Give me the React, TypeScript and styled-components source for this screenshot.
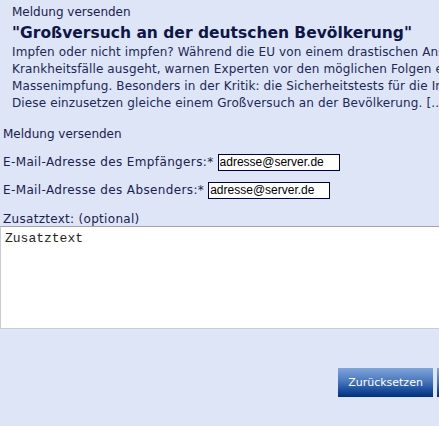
import React from "react";
import styled, { createGlobalStyle } from "styled-components";

const GlobalStyle = createGlobalStyle`
  html, body {
    margin: 0;
    padding: 0;
    background: #dde5f6;
    overflow: hidden;
  }
  body {
    font-family: "DejaVu Sans", Verdana, sans-serif;
    font-size: 12px;
    color: #1c2857;
  }
`;

const leadLines = [
  "Impfen oder nicht impfen? Während die EU von einem drastischen Anstieg der",
  "Krankheitsfälle ausgeht, warnen Experten vor den möglichen Folgen einer",
  "Massenimpfung. Besonders in der Kritik: die Sicherheitstests für die Impfstoffe.",
  "Diese einzusetzen gleiche einem Großversuch an der Bevölkerung. [...]",
];

export default function App() {
  return (
    <>
      <GlobalStyle />
      <Page>
        <Teaser>
          <Kicker>Meldung versenden</Kicker>
          <Headline>"Großversuch an der deutschen Bevölkerung"</Headline>
          <Lead>
            {leadLines.map((line) => (
              <span key={line}>{line}</span>
            ))}
          </Lead>
        </Teaser>

        <Form onSubmit={(e) => e.preventDefault()}>
          <FormTitle>Meldung versenden</FormTitle>
          <Fields>
            <FieldRow>
              <label htmlFor="to">E-Mail-Adresse des Empfängers:*</label>
              <MailInput id="to" defaultValue="adresse@server.de" />
            </FieldRow>
            <FieldRow>
              <label htmlFor="from">E-Mail-Adresse des Absenders:*</label>
              <MailInput id="from" defaultValue="adresse@server.de" />
            </FieldRow>
          </Fields>
          <NoteLabel htmlFor="note">Zusatztext: (optional)</NoteLabel>
          <NoteArea id="note" defaultValue="Zusatztext" />
          <Actions>
            <ActionButton type="reset">Zurücksetzen</ActionButton>
            <ActionButton type="submit">Absenden</ActionButton>
          </Actions>
        </Form>
      </Page>
    </>
  );
}

const Page = styled.div`
  width: 560px;
  min-height: 426px;
`;

const Teaser = styled.section`
  padding: 4px 0 0 12px;
`;

const Kicker = styled.div`
  line-height: 17px;
  color: #1a2150;
`;

const Headline = styled.h1`
  margin: 0;
  font-size: 15.5px;
  font-weight: bold;
  line-height: 24px;
  color: #0e1648;
  white-space: nowrap;
`;

const Lead = styled.p`
  margin: -1px 0 0;
  line-height: 17px;
  letter-spacing: 0.12px;
  white-space: nowrap;

  span {
    display: block;
  }
`;

const Form = styled.form`
  margin-top: 14px;
`;

const FormTitle = styled.div`
  padding-left: 3px;
  line-height: 17px;
  color: #1a2150;
`;

const Fields = styled.div`
  display: flex;
  flex-direction: column;
  margin-top: 5px;
`;

const FieldRow = styled.div`
  display: flex;
  align-items: center;
  gap: 4px;
  height: 28px;
  padding-left: 3px;

  label {
    color: #1a2150;
    letter-spacing: 0.37px;
  }
`;

const MailInput = styled.input`
  box-sizing: border-box;
  width: 122px;
  height: 17px;
  padding: 0 1px;
  border: 1px solid #00004a;
  background: #fff;
  font-family: "Liberation Sans", Arial, sans-serif;
  font-size: 12px;
  color: #000;
  outline: none;
`;

const NoteLabel = styled.label`
  display: block;
  margin-top: 8px;
  padding-left: 3px;
  line-height: 14px;
  letter-spacing: 0.3px;
  color: #1a2150;
`;

const NoteArea = styled.textarea`
  display: block;
  box-sizing: border-box;
  width: 100%;
  height: 103px;
  margin: 0;
  padding: 4px 4px;
  border: 1px solid #c6ccd8;
  border-top-color: #a3a3a3;
  background: #fff;
  font-family: "Liberation Mono", "Courier New", monospace;
  font-size: 13px;
  color: #2a2418;
  resize: none;
  outline: none;
`;

const Actions = styled.div`
  display: flex;
  gap: 4px;
  margin-top: 39px;
  padding-left: 338px;
`;

const ActionButton = styled.button`
  width: 95px;
  height: 29px;
  border: none;
  padding: 0;
  background: linear-gradient(to bottom, #7ea6da 0%, #4a78be 45%, #1d4f9e 75%, #00307e 100%);
  color: #fff;
  font-family: "DejaVu Sans", Verdana, sans-serif;
  font-size: 11px;
  cursor: pointer;
`;
